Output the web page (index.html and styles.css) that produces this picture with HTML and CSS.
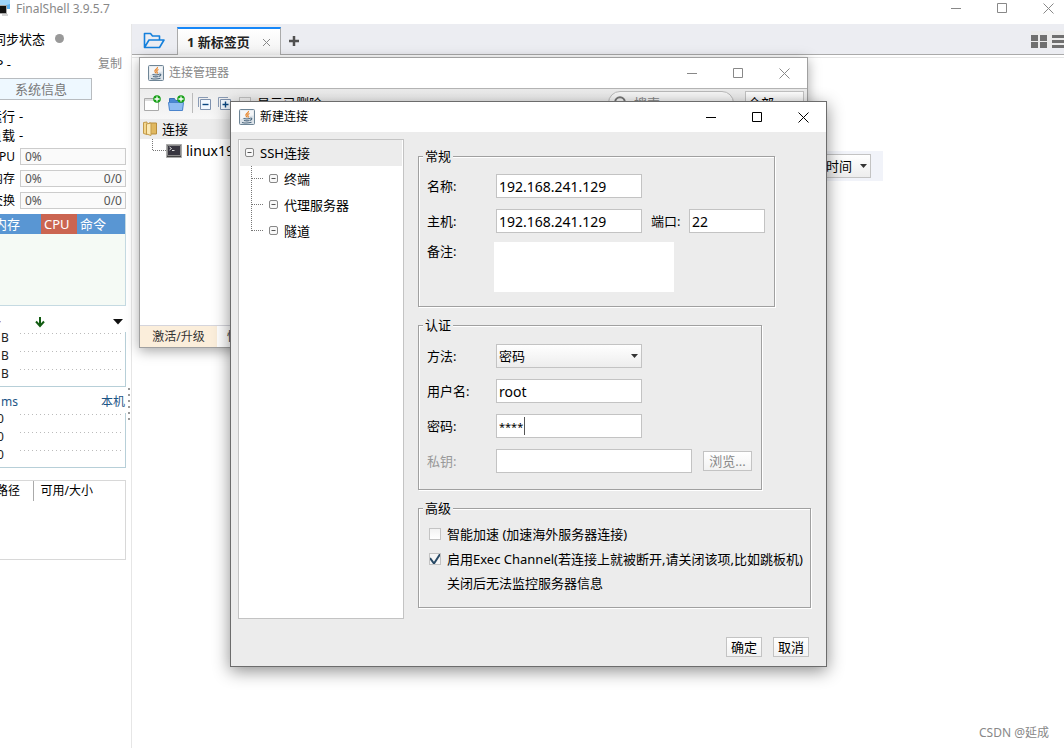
FILE: index.html
```html
<!DOCTYPE html>
<html lang="zh-CN">
<head>
<meta charset="utf-8">
<title>FinalShell 3.9.5.7</title>
<link rel="stylesheet" href="styles.css">
</head>
<body>
<svg class="defs" width="0" height="0" aria-hidden="true">
  <symbol id="min" viewBox="0 0 11 11"><path d="M0 5.500h10" stroke="currentColor"/></symbol>
  <symbol id="max" viewBox="0 0 11 11"><path d="M.5.5h9v9h-9z" fill="none" stroke="currentColor"/></symbol>
  <symbol id="close" viewBox="0 0 11 11"><path d="M.5.5l10 10M10.500.5l-10 10" stroke="currentColor"/></symbol>
  <symbol id="java" viewBox="0 0 16 16">
    <rect x=".5" y=".5" width="15" height="15" rx="1" fill="#dce3e9" stroke="#6e8596"/>
    <path d="M1.500 1.500h13v5q-6 0-13 4z" fill="#f4f6f8"/>
    <path d="M9.500 2c.5 2-3.500 2.800-2.500 4.600.2.700.8 1 .8 1.600M10.500 4.500c-2 .8-2.300 1.600-1.300 2.700.3.500 0 1-.4 1.300" fill="none" stroke="#e8852b" stroke-width="1.200"/>
    <path d="M4.500 9.500q3.500.9 6.500 0M5 11.500q3 .8 5.500 0M3 13.500q5 1.200 9.500-.2M11.300 9.200c2-.5 2.200 1.500-.3 2.200" fill="none" stroke="#4f6a80" stroke-width="1.100"/>
  </symbol>
  <symbol id="node" viewBox="0 0 10 10"><rect x=".5" y=".5" width="8" height="8" rx="1.500" fill="#f8f8f8" stroke="#888"/><path d="M2.500 4.500h4" stroke="#555"/></symbol>
  <symbol id="plusbadge" viewBox="0 0 8 8"><circle cx="4" cy="4" r="3.800" fill="#17a017"/><path d="M4 1.500v5M1.500 4h5" stroke="#fff" stroke-width="1.300"/></symbol>
</svg>

<header class="app-title">
  <svg width="12" height="16" viewBox="0 0 12 16"><path d="M0 0h10v9H0z" fill="#5bb0f0"/><path d="M0 0h10v4L0 7z" fill="#9ed4fa"/><path d="M-2 5.500h8.500v8H-2z" fill="#111" stroke="#aaa"/><path d="M2 15h6" stroke="#aaa"/></svg>
  <h1>FinalShell 3.9.5.7</h1>
  <div class="controls">
    <button aria-label="最小化"><svg><use href="#min"/></svg></button>
    <button aria-label="最大化"><svg><use href="#max"/></svg></button>
    <button aria-label="关闭"><svg><use href="#close"/></svg></button>
  </div>
</header>

<div class="app">
  <aside class="sidebar">
    <div class="monitor">
      <div class="sync"><span>同步状态</span><i class="dot"></i></div>
      <div class="ip"><span>IP -</span><button>复制</button></div>
      <button class="sysinfo">系统信息</button>
      <p class="stat"><b>运行</b>-</p>
      <p class="stat"><b>负载</b>-</p>
      <div class="meters">
        <div class="meter"><b>CPU</b><div><span>0%</span></div></div>
        <div class="meter"><b>内存</b><div><span>0%</span><span>0/0</span></div></div>
        <div class="meter"><b>交换</b><div><span>0%</span><span>0/0</span></div></div>
      </div>
      <div class="procs">
        <table><thead><tr><th class="c-mem">内存</th><th class="c-cpu">CPU</th><th>命令</th></tr></thead></table>
      </div>
      <div class="net-head">
        <svg class="up" width="9" height="11" viewBox="0 0 9 11"><path d="M4.500 11V2M1 5.500l3.500-4 3.500 4" fill="none" stroke="#33339c" stroke-width="2"/></svg>
        <svg class="down" width="10" height="11" viewBox="0 0 10 11"><path d="M5 0v9M1 4.500l4 4.500 4-4.500" fill="none" stroke="#125c12" stroke-width="2"/></svg>
        <svg width="10" height="6" viewBox="0 0 10 6"><path d="M0 0h10L5 5.500z" fill="#111"/></svg>
      </div>
      <div class="graph">
        <div><span>B</span><i></i></div><div><span>B</span><i></i></div><div><span>B</span><i></i></div>
      </div>
      <div class="ping-head"><span>ms</span><span>本机</span></div>
      <div class="graph ping">
        <div><span>0</span><i></i></div><div><span>0</span><i></i></div><div><span>0</span><i></i></div>
      </div>
      <div class="disks">
        <table><thead><tr><th class="c-path">路径</th><th>可用/大小</th></tr></thead></table>
      </div>
    </div>
    <svg class="grip" width="3" height="32" viewBox="0 0 3 32"><path d="M1 0v32" stroke="#999" stroke-width="2" stroke-dasharray="2 4"/></svg>
  </aside>

  <main class="main">
    <nav class="tabs">
      <button class="open" aria-label="打开"><svg width="22" height="17" viewBox="0 0 22 17"><path d="M1.500 15V1.500h6l2 2.500h7v4M1.500 15.500L6 8h15l-4.500 7.500z" fill="none" stroke="#1580dc" stroke-width="1.600" stroke-linejoin="round"/></svg></button>
      <div class="tab"><span>1 新标签页</span><button aria-label="关闭标签"><svg width="7" height="7" viewBox="0 0 7 7"><path d="M0 0l7 7M7 0L0 7" stroke="#888"/></svg></button></div>
      <button class="add" aria-label="新建标签"><svg width="10" height="10" viewBox="0 0 10 10"><path d="M5 0v10M0 5h10" stroke="#505050" stroke-width="2.500"/></svg></button>
      <div class="views">
        <svg width="16" height="13" viewBox="0 0 16 13"><path d="M0 0h7v6H0zM9 0h7v6H9zM0 7h7v6H0zM9 7h7v6H9z" fill="#707070"/></svg>
        <svg width="12" height="13" viewBox="0 0 12 13"><path d="M0 1.500h12M0 6.500h12M0 11.500h12" stroke="#707070" stroke-width="3"/></svg>
      </div>
    </nav>
    <div class="pane">
      <div class="recent"><select aria-label="排序"><option>访问时间</option></select></div>
    </div>
    <p class="credit">CSDN @延成</p>
  </main>
</div>

<section class="window manager" aria-label="连接管理器">
  <header>
    <svg class="java"><use href="#java"/></svg><h2>连接管理器</h2>
    <div class="controls">
      <button aria-label="最小化"><svg><use href="#min"/></svg></button>
      <button aria-label="最大化"><svg><use href="#max"/></svg></button>
      <button aria-label="关闭"><svg><use href="#close"/></svg></button>
    </div>
  </header>
  <div class="toolbar">
    <button aria-label="新建"><svg width="17" height="17" viewBox="0 0 17 17"><path d="M.5 3.500h14v12H.5z" fill="#fff" stroke="#aaa"/><path d="M1 4h13v2H1z" fill="#ddd"/><use href="#plusbadge" x="9" y="0" width="8" height="8"/></svg></button>
    <button aria-label="新建文件夹"><svg width="17" height="17" viewBox="0 0 17 17"><path d="M1.500 3.500h5l1 2h7v9h-13z" fill="#4a88d4" stroke="#3970b5"/><path d="M.5 7.500h15l-1 8h-13z" fill="#8fbcf2" stroke="#4b84cc"/><use href="#plusbadge" x="9" y="0" width="8" height="8"/></svg></button>
    <i class="sep"></i>
    <button aria-label="全部折叠"><svg width="13" height="13" viewBox="0 0 13 13"><path d="M.5 10V.5H10" fill="none" stroke="#8a9bb5"/><path d="M2.500 2.500h10v10h-10z" fill="#f2f8ff" stroke="#7f92ae"/><path d="M4.500 7.500h6" stroke="#0a4680" stroke-width="1.400"/></svg></button>
    <button aria-label="全部展开"><svg width="13" height="13" viewBox="0 0 13 13"><path d="M.5 10V.5H10" fill="none" stroke="#8a9bb5"/><path d="M2.500 2.500h10v10h-10z" fill="#f2f8ff" stroke="#7f92ae"/><path d="M4.500 7.500h6M7.500 4.500v6" stroke="#0a4680" stroke-width="1.400"/></svg></button>
    <label class="check"><input type="checkbox">显示已删除</label>
    <label class="search"><svg width="14" height="14" viewBox="0 0 14 14"><circle cx="6" cy="6" r="4.800" fill="none" stroke="#777" stroke-width="2"/><path d="M9 9l4 4" stroke="#777" stroke-width="2"/></svg><input type="text" placeholder="搜索" aria-label="搜索"></label>
    <select class="scope" aria-label="范围"><option>全部</option></select>
  </div>
  <ul class="hosts">
    <li class="folder"><svg width="14" height="16" viewBox="0 0 14 16"><path d="M6 2h7.500v11H6z" fill="#e0b860" stroke="#b78d3c"/><path d="M.5 1.500L4 1v12.500l-3.500-1z" fill="#f3d68d" stroke="#c39a48"/><path d="M3.500 3L8 2v12.500L3.500 13z" fill="#fbe9b5" stroke="#c39a48"/></svg>连接</li>
    <li class="host"><svg width="14" height="24" viewBox="0 0 14 24"><path d="M.5 0v12M1 11.500h13" stroke="#777" stroke-dasharray="1 1"/></svg><svg width="16" height="14" viewBox="0 0 16 14"><path d="M.5.5h15v13H.5z" fill="#444" stroke="#aaa"/><path d="M1.500 1.500h13v10h-13z" fill="#383640" stroke="#8a8a8a"/><path d="M3.500 3l2 1.500-2 1.500M6 6.500h2.500" fill="none" stroke="#ddd"/></svg><span>linux192</span></li>
  </ul>
  <footer><button class="upgrade">激活/升级</button><span>快捷</span></footer>
</section>

<section class="window dialog" role="dialog" aria-label="新建连接">
  <header>
    <svg class="java"><use href="#java"/></svg><h2>新建连接</h2>
    <div class="controls">
      <button aria-label="最小化"><svg><use href="#min"/></svg></button>
      <button aria-label="最大化"><svg><use href="#max"/></svg></button>
      <button aria-label="关闭"><svg><use href="#close"/></svg></button>
    </div>
  </header>
  <div class="dialog-body">
    <ul class="tree">
      <li class="root"><svg class="node"><use href="#node"/></svg>SSH连接</li>
      <li><svg class="branch"><path d="M.5 0v26M1 12.500h12"/></svg><svg class="node"><use href="#node"/></svg>终端</li>
      <li><svg class="branch"><path d="M.5 0v26M1 12.500h12"/></svg><svg class="node"><use href="#node"/></svg>代理服务器</li>
      <li><svg class="branch"><path d="M.5 0v13M1 12.500h12"/></svg><svg class="node"><use href="#node"/></svg>隧道</li>
    </ul>
    <form class="form" id="conn">
      <fieldset class="general">
        <legend>常规</legend>
        <div class="row"><label for="name">名称:</label><input id="name" type="text" value="192.168.241.129"></div>
        <div class="row"><label for="host">主机:</label><input id="host" type="text" value="192.168.241.129"><label class="port-label" for="port">端口:</label><input id="port" class="port" type="text" value="22"></div>
        <div class="row note"><label for="note">备注:</label><textarea id="note"></textarea></div>
      </fieldset>
      <fieldset class="auth">
        <legend>认证</legend>
        <div class="row"><label for="method">方法:</label><select id="method"><option>密码</option></select></div>
        <div class="row"><label for="user">用户名:</label><input id="user" type="text" value="root"></div>
        <div class="row"><label for="pass">密码:</label><input id="pass" class="pass" type="text" value="****"></div>
        <div class="row"><label class="off" for="key">私钥:</label><input id="key" class="key" type="text" disabled><button class="btn browse" type="button" disabled>浏览...</button></div>
      </fieldset>
      <fieldset class="advanced">
        <legend>高级</legend>
        <label class="check"><input type="checkbox">智能加速 (加速海外服务器连接)</label>
        <label class="check"><input type="checkbox" checked>启用Exec Channel(若连接上就被断开,请关闭该项,比如跳板机)</label>
        <p>关闭后无法监控服务器信息</p>
      </fieldset>
    </form>
  </div>
  <footer><button class="btn">确定</button><button class="btn">取消</button></footer>
</section>
</body>
</html>
```

FILE: styles.css
```css
* { box-sizing: border-box; }
body {
  margin: 0;
  height: 100vh;
  display: flex;
  flex-direction: column;
  overflow: hidden;
  position: relative;
  background: #fff;
  color: #000;
  font: 13px/18px "Noto Sans", "Noto Sans CJK SC", sans-serif;
}
h1, h2, p, ul { margin: 0; padding: 0; }
ul { list-style: none; }
b { font-weight: normal; }
button, input, select, textarea { font: inherit; color: inherit; margin: 0; border-radius: 0; outline: none; }
button { border: 0; padding: 0; background: none; }
svg { display: block; flex: none; }
.defs { position: absolute; }

.controls { margin-left: auto; display: flex; gap: 35px; }
.controls svg { width: 11px; height: 11px; }

.app-title { height: 24px; display: flex; align-items: flex-start; gap: 4px; padding-right: 10px; color: #888; }
.app-title h1 { font-size: 12px; font-weight: normal; }
.app-title .controls { padding-top: 3px; }

.app { flex: 1; display: flex; min-height: 0; }
.sidebar { width: 132px; flex: none; overflow: hidden; border-right: 1px solid #e6e6e6; position: relative; }
.monitor { margin-left: -12px; padding-right: 5px; }
.grip { position: absolute; right: 0; top: 364px; }

.sync { display: flex; align-items: center; gap: 10px; height: 29px; padding-left: 5px; }
.dot { width: 9px; height: 9px; border-radius: 50%; background: #999; }
.ip { display: flex; justify-content: space-between; align-items: center; height: 22px; padding: 0 4px 0 3px; }
.ip button { font-size: 12px; color: #888; }
.sysinfo { display: block; width: 102px; height: 22px; margin: 3px 0 6px 2px; border: 1px solid #b8bcc0; background: #eef8ff; color: #777; line-height: 18px; }
.stat { display: flex; gap: 4px; height: 19px; align-items: center; }
.stat b, .meter b { width: 27px; flex: none; text-align: right; white-space: nowrap; }
.meters { display: grid; gap: 5px; padding: 4px 0 5px; }
.meter { display: flex; gap: 5px; align-items: center; height: 17px; font-size: 12px; }
.meter div { flex: 1; height: 17px; border: 1px solid #ccc; background: #fafafa; padding: 0 3px 0 4px; display: flex; justify-content: space-between; align-items: center; color: #555; }

table { border-collapse: collapse; width: 100%; }
th { font-weight: normal; text-align: left; padding: 0; }
.procs { height: 92px; background: #f5faf5; border: solid #c5dae2; border-width: 0 1px 1px 0; }
.procs th { height: 20px; line-height: 20px; background: #5996d3; color: #fff; padding-left: 3px; }
.procs .c-mem { width: 53px; padding-left: 6px; }
.procs .c-cpu { width: 36px; background: #cb6551; }

.net-head { height: 26px; display: flex; align-items: center; justify-content: space-between; padding: 6px 3px 0 4px; }
.net-head .down { margin-right: 34px; }
.graph { height: 55px; padding: 1px 2px 0 13px; border: solid #b7cfd8; border-width: 0 1px 1px 0; color: #222; font-size: 12px; }
.graph div { display: flex; justify-content: space-between; height: 18px; line-height: 10px; }
.graph i { width: 103px; height: 1px; background: repeating-linear-gradient(90deg, #bbb 0 1px, transparent 1px 4px); }
.ping-head { display: flex; justify-content: space-between; height: 26px; padding: 6px 1px 0 13px; color: #1c5586; font-size: 12px; }
.ping { padding-left: 9px; }
.disks { height: 80px; margin-top: 12px; border: 1px solid #d8d8d8; }
.disks th { height: 20px; line-height: 20px; font-size: 12px; padding-left: 7px; white-space: nowrap; }
.disks .c-path { width: 44px; border-right: 1px solid #aaa; }

.main { flex: 1; min-width: 0; display: flex; flex-direction: column; }
.tabs { display: flex; height: 31px; background: #ecedf2; border-bottom: 1px solid #aaa; align-items: center; }
.open { padding: 3px 12px 0 11px; }
.tab { display: flex; align-items: center; gap: 13px; height: 28px; margin-top: 3px; padding: 0 10px 0 9px; border: solid #aaa; border-width: 0 1px; border-top: 2px solid #1687f8; background: linear-gradient(#fff, #f2f2f2); color: #222; font-weight: bold; white-space: nowrap; }
.tab button { padding-top: 2px; }
.add { margin: 3px 0 0 8px; }
.views { margin-left: auto; padding: 4px 0 0; display: flex; gap: 5px; background: #ebebeb; overflow: hidden; }
.pane { flex: 1; margin-top: 2px; border-top: 1px solid #e6e6e6; display: flex; justify-content: center; padding-top: 93px; }
.recent { width: 570px; height: 30px; padding: 3px 12px; background: #f1f3f9; display: flex; justify-content: flex-end; }
.credit { align-self: flex-end; padding: 0 15px 6px 0; font-size: 12px; color: #888; }

select { appearance: none; height: 24px; padding: 0 2px; border: 1px solid #c3c3c3; background: url("data:image/svg+xml,%3Csvg xmlns='http://www.w3.org/2000/svg' width='7' height='4'%3E%3Cpath d='M0 0h7L3.500 4z' fill='%23333'/%3E%3C/svg%3E") right 3px center no-repeat, linear-gradient(#fff, #ededed); }
.recent select { width: 74px; }

.window { position: absolute; display: flex; flex-direction: column; border: 1px solid #a0a0a0; background: #fff; box-shadow: 0 3px 12px rgba(0, 0, 0, .35); }
.window > header { height: 30px; flex: none; display: flex; align-items: center; gap: 5px; padding: 0 17px 0 8px; background: #fff; }
.window h2 { font-size: 12px; font-weight: normal; }
.java { width: 16px; height: 16px; }

.manager { left: 139px; top: 57px; width: 669px; height: 291px; }
.manager > header { color: #888; }
.toolbar { height: 31px; flex: none; display: flex; align-items: center; padding: 0 3px 2px 4px; border-top: 1px solid #b5b5b5; background: linear-gradient(#ececec, #f7f7f7); gap: 7px; }
.toolbar .check { margin-left: 1px; height: 18px; }
.sep { width: 1px; height: 20px; margin-right: -2px; background: #bbb; }
.search { display: flex; align-items: center; gap: 6px; margin-left: auto; width: 126px; height: 24px; padding: 0 5px; border: 1px solid #bbb; border-radius: 12px; background: #f8f8f8; }
.search input { width: 90px; padding: 0; border: 0; background: none; }
.search input::placeholder { color: #888; }
.scope { width: 59px; margin-left: 4px; }
.hosts { flex: 1; }
.hosts li { display: flex; align-items: center; }
.folder { height: 20px; gap: 5px; padding-left: 3px; background: #ececec; }
.host { height: 24px; padding-left: 12px; }
.host span { font-size: 14px; padding-left: 4px; }
.manager > footer { height: 22px; display: flex; gap: 10px; align-items: stretch; border-top: 1px solid #d5d5dc; font-size: 12px; color: #333; }
.upgrade { width: 77px; background: #fbeedb; }
.manager > footer span { line-height: 21px; }

.dialog { left: 230px; top: 101px; width: 597px; border-color: #6c6c6c; background: #ececec; box-shadow: 0 4px 16px rgba(0, 0, 0, .45); }
.dialog-body { display: flex; gap: 14px; padding: 7px 15px 0 7px; }
.tree { width: 166px; flex: none; padding: 0 1px; border: 1px solid #c3c3c3; background: #fff; }
.tree li { display: flex; align-items: center; height: 26px; padding-left: 11px; gap: 5px; }
.tree .root { padding-left: 5px; background: #ececec; }
.node { width: 10px; height: 10px; }
.branch { width: 13px; height: 26px; stroke: #777; stroke-dasharray: 1 1; }

.form { flex: 1; min-width: 0; display: flex; flex-direction: column; align-items: flex-start; gap: 9px; padding: 8px 0 11px; }
fieldset { min-width: 0; margin: 0; border: 1px solid #a0a0a0; padding: 0 8px; box-shadow: 1px 1px 0 #fff, inset 1px 1px 0 #fff; }
legend { margin-left: -4px; padding: 0 2px; height: 18px; background: #ececec; }
.general { width: 357px; padding-top: 9px; padding-bottom: 14px; }
.auth { width: 344px; padding-top: 10px; padding-bottom: 16px; }
.advanced { width: 393px; padding-top: 4px; padding-bottom: 11px; }
.row { display: flex; align-items: center; margin-bottom: 11px; }
.row:last-child { margin-bottom: 0; }
.row label { width: 69px; }
.row .port-label { width: 38px; margin-left: 9px; }
.row .off { color: #999; }
.row input, .row select { width: 146px; height: 24px; border: 1px solid #c3c3c3; }
.row input { padding: 0 2px; background-color: #fff; font-size: 14px; }
.row .port { width: 76px; }
.row .key { width: 196px; }
.row .pass { background: linear-gradient(#555, #555) 27px 2px / 1px 18px no-repeat #fff; font-size: 11px; }
.note { align-items: flex-start; margin-top: -2px; }
.row.note label { width: 67px; }
.note textarea { display: block; width: 180px; height: 50px; border: 0; resize: none; background: #fff; }
.btn { height: 20px; padding: 0 4px; border: 1px solid #c3c3c3; background: linear-gradient(#fff, #f2f2f2); line-height: 18px; white-space: nowrap; }
.browse { width: 49px; margin-left: 11px; color: #888; }

.check { display: flex; align-items: center; gap: 6px; white-space: nowrap; }
.check input { appearance: none; width: 12px; height: 12px; flex: none; border: 1px solid #c3c3c3; background: linear-gradient(#f2f2f2, #fff); }
.check input:checked { background: url("data:image/svg+xml,%3Csvg xmlns='http://www.w3.org/2000/svg' width='12' height='12'%3E%3Cpath d='M1 5l4 5.500 6.500-10' fill='none' stroke='%23294a66' stroke-width='2'/%3E%3C/svg%3E") border-box center no-repeat #f6f6f6; }
.advanced .check { height: 25px; padding-left: 2px; }
.advanced p { padding-left: 20px; line-height: 25px; }
.dialog > footer { display: flex; justify-content: flex-end; gap: 11px; padding: 18px 17px 9px; }
.dialog > footer .btn { width: 36px; }
```
